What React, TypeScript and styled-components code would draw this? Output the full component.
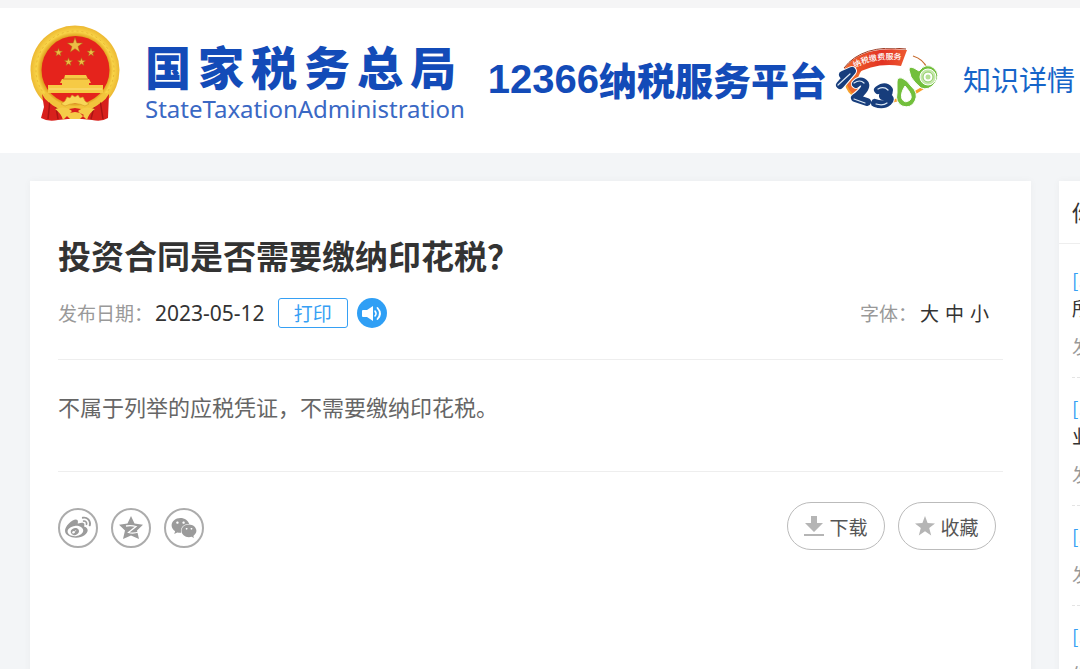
import React from "react";
import styled, { createGlobalStyle } from "styled-components";
import { FaWeibo, FaWeixin } from "react-icons/fa";

const GlobalStyle = createGlobalStyle`
  * { box-sizing: border-box; }
  body {
    margin: 0;
    background: #f3f5f7;
    color: #333;
    font-family: "Noto Sans CJK SC", "Noto Sans", sans-serif;
    font-size: 19px;
  }
  h1, h2, h3, p, ul, dl, dd { margin: 0; padding: 0; }
  button { font-family: inherit; cursor: pointer; }
  a { color: inherit; text-decoration: none; }
`;

const Page = styled.div`
  display: flex;
  flex-direction: column;
  min-height: 100vh;
  overflow: hidden;
`;

const Header = styled.header`
  display: flex;
  align-items: center;
  min-height: 153px;
  padding: 0 0 4px 30px;
  border-top: 8px solid #f5f5f6;
  background: #fff;
  white-space: nowrap;
`;

const Brand = styled.a`
  display: flex;
  align-items: center;
  gap: 25px;
  padding-bottom: 10px;
`;

const BrandText = styled.span`
  display: flex;
  flex-direction: column;
  gap: 4px;
  padding-top: 12px;
  color: #134bb8;
`;

const BrandName = styled.span`
  font-size: 46px;
  font-weight: 900;
  line-height: 54px;
  letter-spacing: 7px;
`;

const BrandLatin = styled.span`
  font-family: "Noto Sans", sans-serif;
  font-size: 24px;
  line-height: 26px;
  color: #3a68c4;
`;

const Platform = styled.span`
  display: flex;
  align-items: center;
  margin-left: 23px;
  color: #134bb8;
  font-size: 38px;
  font-weight: 900;
  line-height: 48px;
`;

const Hotline = styled.span`
  font-family: "Liberation Sans", sans-serif;
  font-size: 40px;
  font-weight: 700;
`;

const Mascot = styled.svg`
  flex: none;
  margin: 0 24px 0 8px;
`;

const Section = styled.h2`
  color: #1665c9;
  font-size: 28px;
  font-weight: 400;
  line-height: 40px;
`;

const Content = styled.div`
  display: flex;
  flex: 1;
  gap: 28px;
  padding: 28px 0 0 30px;
`;

const Article = styled.main`
  flex: 1 0 calc(100vw - 79px);
  padding: 51px 28px 40px;
  background: #fff;
  box-shadow: 0 0 8px rgba(0, 0, 0, 0.04);
`;

const Title = styled.h1`
  font-size: 33px;
  font-weight: 700;
  line-height: 46px;
`;

const Meta = styled.div`
  display: flex;
  align-items: center;
  justify-content: space-between;
  padding: 20px 14px 31px 0;
  border-bottom: 1px solid #eee;
`;

const MetaGroup = styled.div`
  display: flex;
  align-items: center;
  line-height: 30px;
`;

const Label = styled.span`
  color: #999;
`;

const PublishDate = styled.time`
  margin: 0 13px 0 2px;
  font-family: "Noto Sans", sans-serif;
  font-size: 21px;
`;

const PrintButton = styled.button`
  height: 30px;
  margin-right: 9px;
  padding: 0 15px;
  border: 1px solid #36a0f4;
  border-radius: 3px;
  background: #fff;
  color: #36a0f4;
  font-size: 19px;
  line-height: 28px;
`;

const SpeakButton = styled.button`
  display: flex;
  width: 30px;
  height: 30px;
  padding: 0;
  border: 0;
  border-radius: 50%;
  background: #2f9ff5;
`;

const SizeOptions = styled.div`
  display: flex;
  gap: 6px;
  padding-left: 3px;
`;

const SizeButton = styled.button`
  padding: 0;
  border: 0;
  background: none;
  color: #333;
  font-size: 19px;
  line-height: 30px;
`;

const Body = styled.p`
  padding: 27px 0 46px;
  border-bottom: 1px solid #eee;
  color: #666;
  font-size: 22px;
  line-height: 38px;
`;

const Actions = styled.div`
  display: flex;
  align-items: flex-end;
  justify-content: space-between;
  padding: 30px 7px 0 0;
`;

const ButtonRow = styled.div`
  display: flex;
  gap: 13px;
`;

const ShareLink = styled.a`
  display: flex;
  align-items: center;
  justify-content: center;
  width: 40px;
  height: 40px;
  margin-bottom: 2px;
  border: 2px solid #acacac;
  border-radius: 50%;
  color: #9b9b9b;
`;

const PillButton = styled.button`
  display: flex;
  align-items: center;
  justify-content: center;
  gap: 5px;
  width: 98px;
  height: 48px;
  padding: 0;
  border: 1px solid #bbb;
  border-radius: 24px;
  background: #fff;
  color: #555;
  font-size: 19px;
`;

const Sidebar = styled.aside`
  flex: 0 0 320px;
  background: #fff;
  box-shadow: 0 0 8px rgba(0, 0, 0, 0.04);
`;

const SidebarTitle = styled.h2`
  padding: 0 13px 2px;
  border-bottom: 1px solid #eee;
  font-size: 22px;
  font-weight: 400;
  line-height: 60px;
`;

const RelatedList = styled.ul`
  padding: 6px 13px 0;
  list-style: none;
`;

const RelatedItem = styled.li`
  padding: 16px 0 17px;
  border-bottom: 1px dashed #e4e4e4;
  line-height: 28px;
`;

const RelatedLink = styled.a`
  display: block;
`;

const Tag = styled.span`
  display: block;
  color: #36a0f4;
`;

const RelatedDate = styled.p`
  padding-top: 10px;
  color: #999;
`;

const starPoints = (cx: number, cy: number, r: number) =>
  Array.from({ length: 10 }, (_, i) => {
    const a = (Math.PI / 5) * i - Math.PI / 2;
    const d = i % 2 ? r * 0.4 : r;
    return `${(cx + d * Math.cos(a)).toFixed(2)},${(cy + d * Math.sin(a)).toFixed(2)}`;
  }).join(" ");

const Emblem = () => (
  <svg width="90" height="98" viewBox="0 0 90 98" aria-hidden="true">
    <defs>
      <radialGradient id="gold" cx="50%" cy="50%" r="50%">
        <stop offset="0.76" stopColor="#e0a020" />
        <stop offset="0.86" stopColor="#f9d548" />
        <stop offset="1" stopColor="#ecb832" />
      </radialGradient>
    </defs>
    <circle cx="45" cy="45" r="44.5" fill="url(#gold)" />
    <circle cx="45" cy="45" r="39" fill="none" stroke="#e8b835" strokeWidth="1" strokeDasharray="2 3" />
    <circle cx="45.5" cy="45" r="34" fill="#e5231c" />
    <path d="M12 69 Q17 80 30 81 L45 83 L61 81 Q73 80 79 69 L78 93 Q72 97 62 95 L52 94 H38 L28 95 Q18 97 11 93 L14 82 Z" fill="#d8201c" />
    <path d="M20 75 L18 94 M70 75 L73 94 M26 82 L28 94 M64 82 L61 94" stroke="#a81414" strokeWidth="1.5" />
    <path d="M17 67 Q28 81 45 81 Q62 81 74 67 L77 70 Q68 83 57 85 L45 83 L33 85 Q22 83 13 70 Z" fill="#f2c33c" />
    <g fill="#edbd45" stroke="#a96a15" strokeWidth="0.5">
      <polygon points={starPoints(45, 20.5, 8)} />
      <polygon points={starPoints(28.5, 27.5, 4.3)} />
      <polygon points={starPoints(61, 27.5, 4.3)} />
      <polygon points={starPoints(38.5, 37, 4.3)} />
      <polygon points={starPoints(51.5, 37, 4.3)} />
    </g>
    <path d="M35 50 H56 L58 54 H59 L61 58 H30 L32 54 H34 Z M32 58 H59 V60 H73 V68 H18 V60 H32 Z" fill="#f6ca45" />
    <path d="M33 54 H58" stroke="#c98a1c" strokeWidth="1" />
    <path d="M19 64 H72" stroke="#fce083" strokeWidth="1" />
    <path d="M35 76 L37 72 L40 73 L42 70 L45 72 L48 70 L50 73 L53 72 L55 76 L59 79 L55 81 Q45 76 35 81 L31 79 Z" fill="#f8d658" stroke="#d49a22" strokeWidth="0.6" />
    <path d="M25 84 Q35 80 42 86 L33 95 Q31 88 25 84 Z M65 84 Q55 80 48 86 L57 95 Q59 88 65 84 Z M36 90 Q45 84 54 90 L50 94 H40 Z" fill="#f5cc48" />
  </svg>
);

const HotlineMascot = () => (
  <Mascot width="104" height="62" viewBox="0 0 104 62" aria-hidden="true">
    <defs>
      <linearGradient id="banner" x1="0" x2="1" y1="0" y2="0">
        <stop offset="0" stopColor="#f0682c" />
        <stop offset="0.6" stopColor="#e23324" />
        <stop offset="1" stopColor="#ee5a30" />
      </linearGradient>
      <path id="bannerArc" d="M20 20 Q38 9 68 12" />
    </defs>
    <path d="M12 26 Q7 47 33 53 Q62 59 92 37" fill="none" stroke="#f6a02c" strokeWidth="3" />
    <path d="M18 19 Q4 34 20 48 L27 46 Q18 34 27 22 Z" fill="#ef6a2e" />
    <path d="M9 21 Q25 -3 72 2 L66 18 Q40 14 19 27 Z" fill="url(#banner)" />
    <path d="M9 20 Q27 -4 71 1" fill="none" stroke="#9c3a22" strokeWidth="1" />
    <text fill="#fff" fontSize="8" fontWeight="500">
      <textPath href="#bannerArc">纳税缴费服务</textPath>
    </text>
    <path d="M78 8 Q88 11 92 20" fill="none" stroke="#c66a2c" strokeWidth="1.3" />
    <g fill="none" strokeLinecap="round" strokeLinejoin="round">
      <g stroke="#fff" strokeWidth="10">
        <path d="M8 27 L17 23 L5 37" />
        <path d="M21 36 Q26 31 30 36 Q32 41 20 50 L32 54" />
        <path d="M43 42 Q50 37 54 42 Q54 47 48 48 Q58 49 53 54 Q48 58 40 55" />
      </g>
      <g stroke="#173d7c" strokeWidth="8">
        <path d="M8 27 L17 23 L5 37" />
        <path d="M21 36 Q26 31 30 36 Q32 41 20 50 L32 54" />
        <path d="M43 42 Q50 37 54 42 Q54 47 48 48 Q58 49 53 54 Q48 58 40 55" />
      </g>
      <g stroke="#dbe8f6" strokeWidth="1.2">
        <path d="M3 37 L15 26" />
        <path d="M19 35 Q25 31 29 35 M19 51 L30 55" />
        <path d="M43 41 Q49 38 53 42 M41 56 Q48 58 52 55" />
      </g>
    </g>
    <g stroke="#fff" strokeWidth="1">
      <path d="M74 22 Q74 18 79 20 L84 23 Q91 14 99 20 Q106 27 100 35 Q94 43 86 40 Q79 34 76 29 Z" fill="#72bf3c" />
      <circle cx="93" cy="29" r="8" fill="#c5e8ab" />
      <circle cx="93" cy="29" r="5" fill="#fff" stroke="#8ccb5e" />
      <circle cx="93" cy="29" r="2.5" fill="#b5df95" stroke="none" />
      <path d="M62 34 Q62 29 67 30 Q72 32 76 38 Q84 45 80 53 Q76 61 67 58 Q60 54 62 45 Z" fill="#72bf3c" />
      <path d="M70 38 Q79 48 75 52 Q70 56 67 51 Q65 46 70 38 Z" fill="#fff" />
    </g>
  </Mascot>
);

const SpeakerIcon = () => (
  <svg width="30" height="30" viewBox="0 0 30 30" aria-hidden="true">
    <path d="M6 12 H10 L16 8 V23 L10 19 H6 Q5 19 5 18 V13 Q5 12 6 12 Z" fill="#fff" />
    <path d="M18 13 Q20 15.5 18 18" fill="none" stroke="#fff" strokeWidth="1.6" strokeLinecap="round" />
    <path d="M20.5 10 Q25.5 15.5 20.5 21" fill="none" stroke="#fff" strokeWidth="1.8" strokeLinecap="round" />
  </svg>
);

const QzoneIcon = () => (
  <svg width="26" height="26" viewBox="0 0 26 26" aria-hidden="true">
    <path d="M13 1 L16.5 8.6 L25 9.8 L19 15.5 L21 24 L13 20.6 L5 24 L7 15.5 L1 9.8 L9.5 8.6 Z" fill="currentColor" />
    <path d="M8 11 Q13 10 18 11.5 L10.5 17.5 Q15 18.8 21 17" fill="none" stroke="#fff" strokeWidth="1.3" />
  </svg>
);

const DownloadIcon = () => (
  <svg width="20" height="20" viewBox="0 0 20 20" fill="#b5b5b5" aria-hidden="true">
    <path d="M7 0 H13 V7 H19 L10 16 L1 7 H7 Z M0 18 H20 V20 H0 Z" />
  </svg>
);

const StarIcon = () => (
  <svg width="20" height="20" viewBox="0 0 20 20" fill="#b5b5b5" aria-hidden="true">
    <path d="M10 0 L12.6 7 L20 7.4 L14.2 12 L16.2 19.5 L10 15.2 L3.8 19.5 L5.8 12 L0 7.4 L7.4 7 Z" />
  </svg>
);

const related = [
  { tag: "[印花税]", title: "所有合同都要缴税吗", date: "2023-05-12" },
  { tag: "[印花税]", title: "业务合同如何缴税", date: "2023-05-12" },
  { tag: "[印花税]", title: "", date: "2023-05-12" },
  { tag: "[印花税]", title: "", date: "2023-05-12" },
];

export default function App() {
  return (
    <Page lang="zh-CN">
      <GlobalStyle />
      <Header>
        <Brand href="#">
          <Emblem />
          <BrandText>
            <BrandName>国家税务总局</BrandName>
            <BrandLatin>StateTaxationAdministration</BrandLatin>
          </BrandText>
        </Brand>
        <Platform>
          <Hotline>12366</Hotline>纳税服务平台
        </Platform>
        <HotlineMascot />
        <Section>知识详情</Section>
      </Header>
      <Content>
        <Article>
          <Title>投资合同是否需要缴纳印花税？</Title>
          <Meta>
            <MetaGroup>
              <Label>发布日期：</Label>
              <PublishDate dateTime="2023-05-12">2023-05-12</PublishDate>
              <PrintButton type="button">打印</PrintButton>
              <SpeakButton type="button" aria-label="朗读">
                <SpeakerIcon />
              </SpeakButton>
            </MetaGroup>
            <MetaGroup>
              <Label>字体：</Label>
              <SizeOptions>
                <SizeButton type="button">大</SizeButton>
                <SizeButton type="button">中</SizeButton>
                <SizeButton type="button">小</SizeButton>
              </SizeOptions>
            </MetaGroup>
          </Meta>
          <Body>不属于列举的应税凭证，不需要缴纳印花税。</Body>
          <Actions>
            <ButtonRow>
              <ShareLink href="#" aria-label="微博">
                <FaWeibo size={26} />
              </ShareLink>
              <ShareLink href="#" aria-label="QQ空间">
                <QzoneIcon />
              </ShareLink>
              <ShareLink href="#" aria-label="微信">
                <FaWeixin size={26} />
              </ShareLink>
            </ButtonRow>
            <ButtonRow>
              <PillButton type="button">
                <DownloadIcon />
                下载
              </PillButton>
              <PillButton type="button">
                <StarIcon />
                收藏
              </PillButton>
            </ButtonRow>
          </Actions>
        </Article>
        <Sidebar>
          <SidebarTitle>你可能感兴趣</SidebarTitle>
          <RelatedList>
            {related.map((item, i) => (
              <RelatedItem key={i}>
                <RelatedLink href="#">
                  <Tag>{item.tag}</Tag>
                  {item.title}
                </RelatedLink>
                <RelatedDate>发布日期：{item.date}</RelatedDate>
              </RelatedItem>
            ))}
          </RelatedList>
        </Sidebar>
      </Content>
    </Page>
  );
}
